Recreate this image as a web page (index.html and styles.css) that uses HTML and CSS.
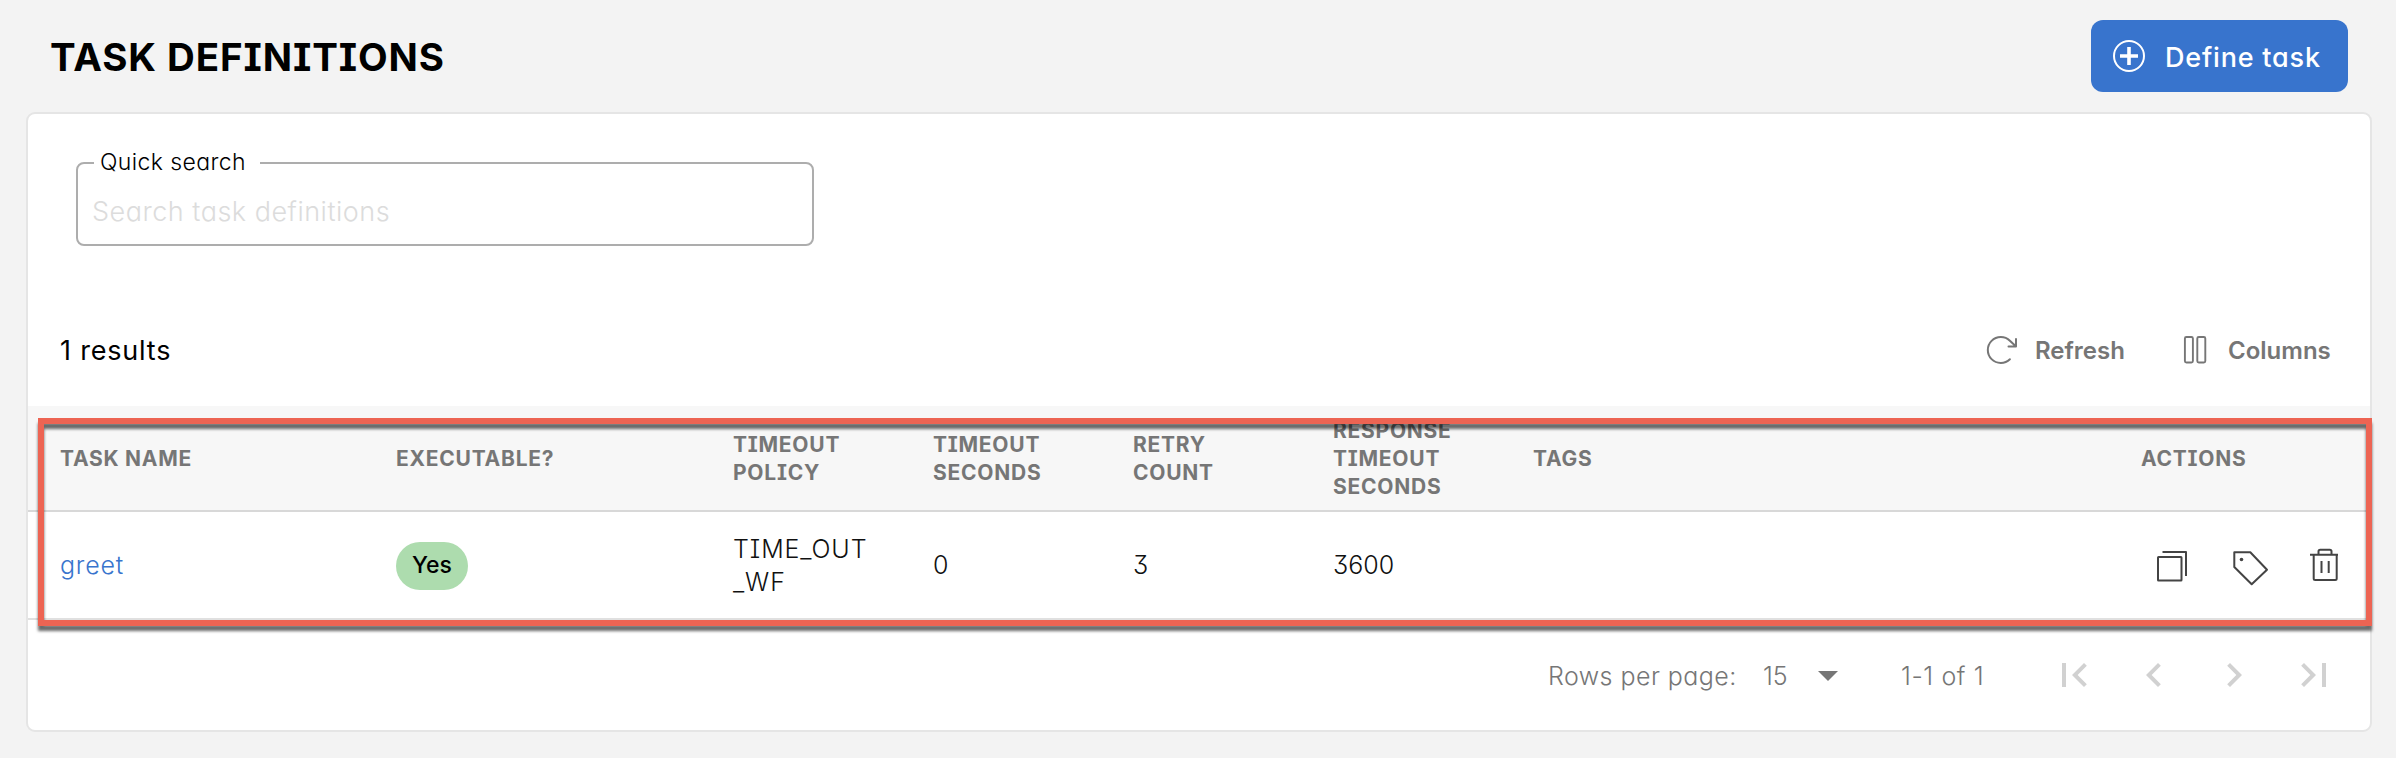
FILE: index.html
```html
<!DOCTYPE html>
<html lang="en">
<head>
<meta charset="utf-8">
<title>Task Definitions</title>
<link rel="stylesheet" href="styles.css">
</head>
<body>
<header class="page-header">
  <h1 class="title">TASK DEFINITIONS</h1>
  <button class="define">
    <svg width="34" height="34" viewBox="0 0 34 34" fill="none" stroke="#fff"><circle cx="17" cy="17" r="15" stroke-width="2"/><path d="M17 8v18M8 17h18" stroke-width="3.6"/></svg>
    <span class="define-text">Define task</span>
  </button>
</header>
<main class="card">
  <div class="search">
    <label class="search-label" for="q"><span class="search-label-text">Quick search</span></label>
    <input class="search-input" id="q" placeholder="Search task definitions">
  </div>
  <div class="toolbar">
    <span class="results">1 results</span>
    <button class="tool tool-refresh">
      <svg width="32" height="32" viewBox="0 0 32 32" fill="none" stroke="#767676" stroke-width="2" stroke-linecap="round" stroke-linejoin="round"><path d="M23.900 25.300a13 13 0 1 1 0-18.600L29.800 12.300M30 5v7.500h-7.500"/></svg>
      <span class="refresh-text">Refresh</span>
    </button>
    <button class="tool tool-columns">
      <svg width="32" height="32" viewBox="0 0 32 32" fill="none" stroke="#767676" stroke-width="1.900"><rect x="5.900" y="3" width="8" height="25.500" rx="1.500"/><rect x="18.300" y="3" width="8" height="25.500" rx="1.500"/></svg>
      <span class="columns-text">Columns</span>
    </button>
  </div>
  <div class="row head">
    <span>TASK NAME</span>
    <span>EXECUTABLE?</span>
    <span>TIMEOUT<br>POLICY</span>
    <span>TIMEOUT<br>SECONDS</span>
    <span>RETRY<br>COUNT</span>
    <span>RESPONSE<br>TIMEOUT<br>SECONDS</span>
    <span>TAGS</span>
    <span class="actions-head">ACTIONS</span>
  </div>
  <div class="row body">
    <a class="link">greet</a>
    <span class="badge">Yes</span>
    <span class="policy">TIME_OUT<br>_WF</span>
    <span>0</span>
    <span>3</span>
    <span>3600</span>
    <span></span>
    <span class="actions">
      <svg width="36" height="36" viewBox="0 0 36 36" fill="none" stroke="#444" stroke-width="2" stroke-linejoin="round"><rect x="4" y="9" width="23.500" height="23.500" rx=".5"/><path d="M8.500 4H32v24"/></svg>
      <svg width="36" height="36" viewBox="0 0 36 36" fill="none" stroke="#444" stroke-width="2" stroke-linejoin="round"><path d="M4.300 4.300H20.300L37 21.700 21.700 36.300 4.300 19z"/><circle cx="11.500" cy="11.500" r="1.800" fill="#444" stroke="none"/></svg>
      <svg width="36" height="36" viewBox="0 0 36 36" fill="none" stroke="#444" stroke-width="2" stroke-linejoin="round"><path d="M4 6.700h28M12.500 6.700V3.500q0-1.700 1.700-1.700h9.600q1.700 0 1.700 1.700v3.200M7.700 6.700v23.800q0 1.500 1.500 1.500h20q1.500 0 1.500-1.500V6.700M15.500 13v12M22.700 13v12"/></svg>
    </span>
  </div>
  <footer class="pager">
    <span class="pager-label">Rows per page:</span>
    <span class="pager-size">15</span>
    <svg class="caret" width="20" height="10" viewBox="0 0 20 10" fill="#767676"><path d="M0 0h20L10 10z"/></svg>
    <span class="pager-range">1-1 of 1</span>
    <span class="pager-nav">
      <svg width="48" height="48" viewBox="0 0 24 24"><path d="M18.410 16.590L13.820 12l4.590-4.590L17 6l-6 6 6 6zM6 6h2v12H6z"/></svg>
      <svg width="48" height="48" viewBox="0 0 24 24"><path d="M15.410 7.410L14 6l-6 6 6 6 1.410-1.410L10.830 12z"/></svg>
      <svg width="48" height="48" viewBox="0 0 24 24"><path d="M10 6L8.590 7.410 13.170 12l-4.580 4.590L10 18l6-6z"/></svg>
      <svg width="48" height="48" viewBox="0 0 24 24"><path d="M5.590 7.410L10.180 12l-4.590 4.590L7 18l6-6-6-6zM16 6h2v12h-2z"/></svg>
    </span>
  </footer>
  <div class="highlight"></div>
</main>
</body>
</html>
```
FILE: styles.css
```css
* { box-sizing: border-box; }
body {
  margin: 0;
  height: 758px;
  overflow: hidden;
  background: #f3f3f3;
  color: #111;
  font-family: Inter, "Liberation Sans", sans-serif;
  font-feature-settings: "cv08", "cv09", "cv11";
}
button, input { font-family: inherit; font-feature-settings: inherit; border: 0; margin: 0; padding: 0; background: none; }
svg { flex: none; overflow: visible; display: block; }
.page-header {
  display: flex;
  align-items: center;
  justify-content: space-between;
  height: 112px;
  padding: 0 48px 0 50px;
}
.title { margin: 2px 0 0; font-size: 38.5px; font-weight: 750; line-height: 48px; letter-spacing: .9px; color: #000; }
.define {
  display: flex;
  align-items: center;
  width: 257px;
  height: 72px;
  padding-left: 21px;
  gap: 19px;
  border-radius: 12px;
  background: #3874cd;
  color: #fff;
  font-size: 27px;
  font-weight: 500;
  letter-spacing: .8px;
  white-space: nowrap;
}
.define-text { margin-top: 2px; }
.card {
  position: relative;
  width: 2346px;
  height: 620px;
  margin-left: 26px;
  padding-top: 48px;
  border: 2px solid #e5e5e5;
  border-radius: 9px;
  background: #fff;
}
.search { position: relative; width: 738px; height: 84px; margin: 0 0 48px 48px; }
.search-input {
  display: block;
  width: 100%;
  height: 100%;
  padding: 14px 0 0 14px;
  border: 2px solid #adadad;
  border-radius: 8px;
  font-size: 27px;
  font-weight: 350;
  letter-spacing: .5px;
}
.search-input::placeholder { color: #dcdcdc; opacity: 1; }
.search-label {
  position: absolute;
  left: 18px;
  top: -14px;
  width: 166px;
  height: 28px;
  padding-left: 6px;
  background: #fff;
  font-size: 23px;
  font-weight: 350;
  line-height: 28px;
  letter-spacing: .4px;
  color: #000;
}
.toolbar { display: flex; align-items: center; height: 112px; padding: 0 41px 0 32px; }
.results { flex: 1; font-size: 27px; font-weight: 400; letter-spacing: .8px; color: #000; }
.tool { display: flex; align-items: center; gap: 17px; font-size: 24px; font-weight: 600; color: #767676; }
.tool-refresh { width: 193px; }
.tool-columns { width: 150px; }
.row {
  display: grid;
  grid-template-columns: 336px 337px 200px 200px 200px 200px 608px 1fr;
  align-items: center;
  padding-left: 32px;
}
.head {
  height: 106px;
  padding-top: 2px;
  border-bottom: 2px solid #d8d8d8;
  background: #f7f7f7;
  font-size: 21px;
  font-weight: 650;
  line-height: 28px;
  letter-spacing: .75px;
  color: #767676;
}
.body {
  height: 108px;
  padding-top: 1px;
  border-bottom: 2px solid #e0e0e0;
  font-size: 25px;
  font-weight: 350;
  line-height: 33px;
}
.link { color: #3874cd; letter-spacing: .8px; }
.policy { letter-spacing: .9px; }
.badge {
  display: flex;
  align-items: center;
  justify-content: center;
  width: 72px;
  height: 48px;
  border-radius: 24px;
  background: #addcae;
  font-size: 23px;
  font-weight: 450;
  color: #000;
}
.actions { display: flex; gap: 40px; padding-left: 13px; }
.pager {
  display: flex;
  align-items: center;
  justify-content: flex-end;
  height: 110px;
  padding-right: 32px;
  font-size: 25px;
  font-weight: 350;
  letter-spacing: .45px;
  color: #767676;
}
.pager-label { width: 215px; margin-top: 2px; }
.pager-size { width: 55px; margin-top: 2px; letter-spacing: 0; }
.caret { margin: 2px 63px 0 0; }
.pager-range { width: 149px; margin-top: 2px; letter-spacing: .6px; }
.pager-nav { display: flex; gap: 32px; fill: #d1d1d1; }
.highlight {
  position: absolute;
  left: 10px;
  top: 304px;
  width: 2334px;
  height: 208px;
  border: 6px solid #ed6453;
  filter: drop-shadow(0 5px 1.5px rgba(0, 0, 0, .58));
  pointer-events: none;
}
```
